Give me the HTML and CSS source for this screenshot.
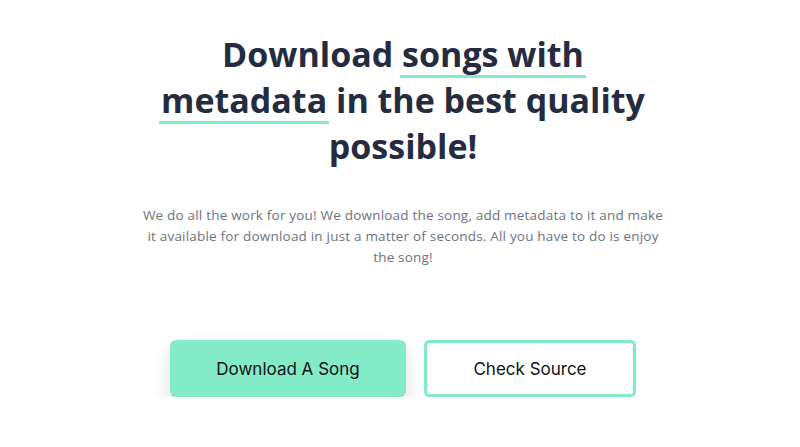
FILE: index.html
```html
<!DOCTYPE html>
<html lang="en">
<head>
    <meta charset="UTF-8">
    <meta name="viewport" content="width=device-width, initial-scale=1.0">
    <title>Song Downloader</title>
    <link rel="stylesheet" href="styles.css">
</head>
<body>
    <section class="hero">
        <h1 class="hero-title">
            Download <span class="marked">songs with</span>
            <span class="marked">metadata</span> in the best quality possible!
        </h1>

        <p class="hero-text">
            We do all the work for you! We download the song, add metadata to it and make
            it available for download in just a matter of seconds. All you have to do is enjoy
            the song!
        </p>

        <div class="hero-actions">
            <a href="#" class="btn btn-primary">Download A Song</a>
            <a href="#" class="btn btn-outline">Check Source</a>
        </div>
    </section>
</body>
</html>
```

FILE: styles.css
```css
body {
    margin: 0;
    background-color: #fff;
    font-family: "Open Sans", "Noto Sans", sans-serif;
}
.hero {
    display: flex;
    flex-direction: column;
    align-items: center;
    padding: 31px 0 0 6px;
}
.hero-title {
    max-width: 520px;
    margin: 0;
    text-align: center;
    font-size: 34px;
    font-weight: 700;
    line-height: 46px;
    color: #252c3f;
}
.marked {
    padding: 0 2px 1px;
    margin: 0 -2px;
    background-image: linear-gradient(#84ebc8, #84ebc8);
    background-repeat: no-repeat;
    background-size: 100% 3px;
    background-position: 0 100%;
}
.hero-text {
    max-width: 524px;
    margin: 36px 0 0;
    text-align: center;
    font-size: 13.5px;
    letter-spacing: 0.2px;
    line-height: 21px;
    color: #6e7280;
}
.hero-actions {
    display: flex;
    gap: 18px;
    margin-top: 72px;
}
.btn {
    display: flex;
    align-items: center;
    justify-content: center;
    height: 57px;
    box-sizing: border-box;
    border-radius: 6px;
    font-family: "Inter", sans-serif;
    font-size: 17px;
    color: #111;
    text-decoration: none;
}
.btn-primary {
    width: 236px;
    background-color: #84ebc8;
    box-shadow: 0 10px 20px rgba(0, 0, 0, 0.12);
}
.btn-outline {
    width: 212px;
    background-color: #fff;
    border: 3px solid #84ebc8;
    border-radius: 5px;
}
```
